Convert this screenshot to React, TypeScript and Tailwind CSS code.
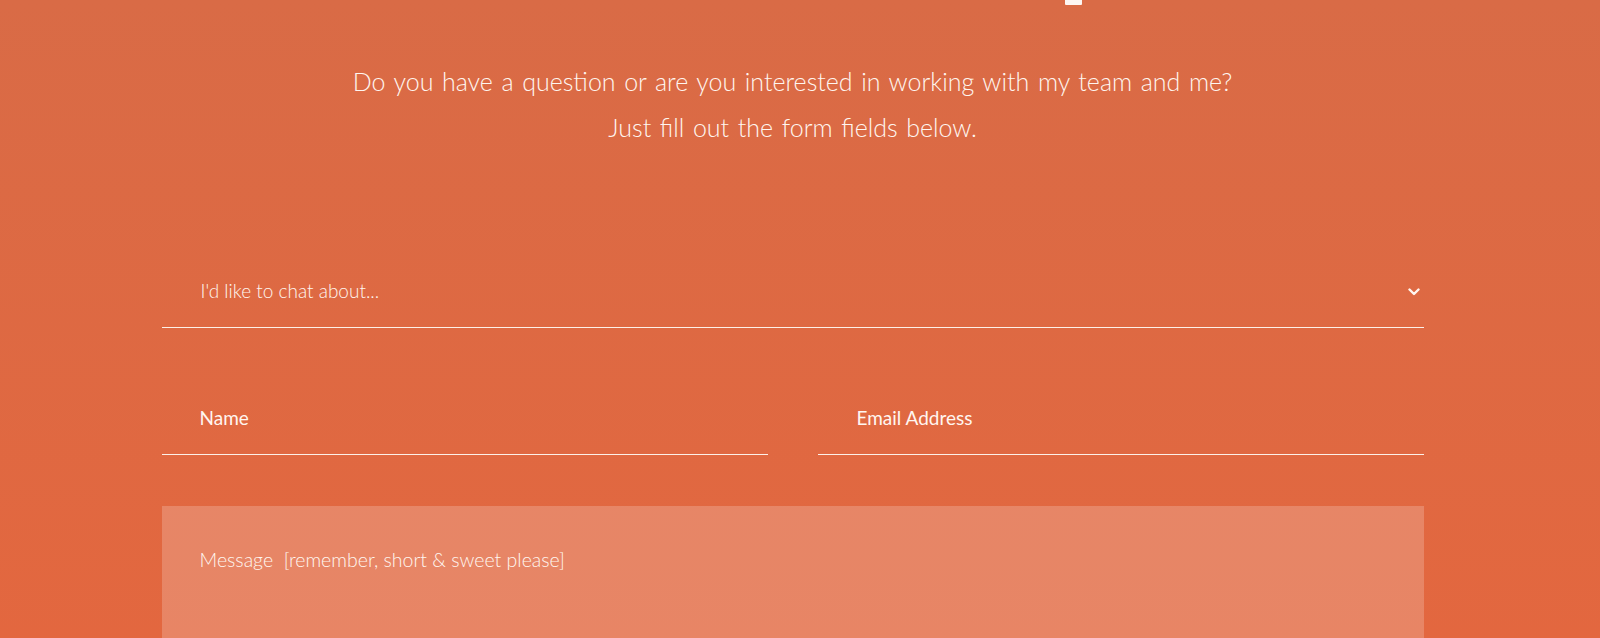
import React from "react";

function Chevron() {
  return (
    <svg width="12" height="8" viewBox="0 0 12 8" fill="none" aria-hidden="true">
      <polyline points="1.5,1.5 6,6 10.5,1.5" stroke="#fff6f0" strokeWidth="2.4" strokeLinecap="round" strokeLinejoin="round" />
    </svg>
  );
}

export default function App() {
  const font = { fontFamily: "Lato, 'Open Sans', 'Liberation Sans', sans-serif" };
  return (
    <div
      className="w-full h-[638px] overflow-hidden bg-gradient-to-b from-[#d96b46] to-[#e3673f] text-[#fff6f0] pr-[15px]"
      style={font}
    >
      <div className="h-[5px] flex">
        <div className="ml-[1065px] w-[17px] h-[5px] bg-[#fdf6f2] rounded-b-[1px]" />
      </div>
      <p className="mt-[53px] text-center text-[25px] leading-[46px] font-light [word-spacing:1.8px]">
        Do you have a question or are you interested in working with my team and me?
        <br />
        Just fill out the form fields below.
      </p>

      <form className="mx-auto w-[1262px] mt-[106px]">
        <div className="h-[72px] border-b border-[#fdf0e8] flex items-center justify-between pl-[39px] pr-[4px]">
          <span className="text-[19px] font-light">I'd like to chat about...</span>
          <Chevron />
        </div>

        <div className="mt-[55px] grid grid-cols-2 gap-[50px]">
          <div className="h-[72px] border-b border-[#fdf0e8] flex items-center pl-[38px]">
            <span className="text-[19px] font-normal">Name</span>
          </div>
          <div className="h-[72px] border-b border-[#fdf0e8] flex items-center pl-[39px]">
            <span className="text-[19px] font-normal">Email Address</span>
          </div>
        </div>

        <div className="mt-[51px] h-[200px] bg-white/20 pl-[38px] pt-[42px]">
          <span className="text-[19.5px] font-light leading-[23px] whitespace-pre">Message  [remember, short &amp; sweet please]</span>
        </div>
      </form>
    </div>
  );
}
